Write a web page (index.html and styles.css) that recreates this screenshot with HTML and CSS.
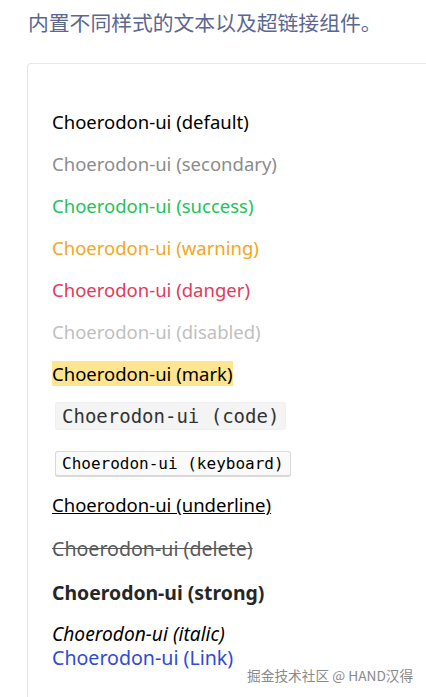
FILE: index.html
```html
<!DOCTYPE html>
<html lang="zh">
<head>
<meta charset="utf-8">
<link rel="stylesheet" href="styles.css">
</head>
<body>
<p class="intro">内置不同样式的文本以及超链接组件。</p>
<div class="card">
  <div class="row"><span class="t">Choerodon-ui (default)</span></div>
  <div class="row"><span class="t secondary">Choerodon-ui (secondary)</span></div>
  <div class="row"><span class="t success">Choerodon-ui (success)</span></div>
  <div class="row"><span class="t warning">Choerodon-ui (warning)</span></div>
  <div class="row"><span class="t danger">Choerodon-ui (danger)</span></div>
  <div class="row"><span class="t disabled">Choerodon-ui (disabled)</span></div>
  <div class="row"><mark class="t mark">Choerodon-ui (mark)</mark></div>
  <div class="row row-code"><code class="code">Choerodon-ui (code)</code></div>
  <div class="row row-kbd"><kbd class="kbd">Choerodon-ui (keyboard)</kbd></div>
  <div class="row row-u"><u class="t">Choerodon-ui (underline)</u></div>
  <div class="row row-del"><del class="t del">Choerodon-ui (delete)</del></div>
  <div class="row row-strong"><strong class="t strong">Choerodon-ui (strong)</strong></div>
  <div class="row-last">
    <div class="line"><span class="t italic">Choerodon-ui (italic)</span></div>
    <div class="line"><a class="t link" href="#">Choerodon-ui (Link)</a></div>
  </div>
</div>
<div class="watermark">掘金技术社区 @ HAND汉得</div>
</body>
</html>
```

FILE: styles.css
```css
html, body {
  margin: 0;
  padding: 0;
  background: #ffffff;
}
body {
  width: 426px;
  height: 697px;
  overflow: hidden;
  position: relative;
  font-family: "Noto Sans", "Noto Sans CJK SC", sans-serif;
}
.intro {
  margin: 8px 0 0 28px;
  font-size: 20.8px;
  line-height: 28px;
  color: #5b6791;
  font-family: "Noto Sans CJK SC", sans-serif;
  white-space: nowrap;
}
.card {
  margin: 27px 0 0 27px;
  width: 420px;
  height: 634px;
  box-sizing: border-box;
  border: 1px solid #e6e6e6;
  border-bottom: none;
  border-radius: 4px 4px 0 0;
  padding: 46px 0 0 24px;
  overflow: hidden;
}
.row {
  height: 42px;
  line-height: 24px;
}
.t {
  font-size: 18.5px;
  color: #000;
}
.secondary { color: #8c8c8c; }
.success { color: #1ec357; }
.warning { color: #f5a623; }
.danger { color: #e5395a; }
.disabled { color: #bfbfbf; }
.mark {
  background: #ffe58f;
  padding: 0;
}
.row-code { height: 47px; }
.code {
  font-family: "DejaVu Sans Mono", monospace;
  font-size: 19px;
  color: #333;
  background: #f4f4f4;
  border: 1px solid #f0f0f0;
  border-radius: 3px;
  padding: 2px 6px;
  margin-left: 3px;
}
.kbd {
  font-family: "DejaVu Sans Mono", monospace;
  font-size: 16px;
  color: #000;
  background: #fafafa;
  border: 1px solid #d9d9d9;
  border-bottom-width: 2px;
  border-radius: 3px;
  padding: 2px 6px;
  margin-left: 3px;
}
.row-u { height: 44px; }
.row-del { height: 44px; }
.del { color: #595959; font-size: 19.6px; }
.strong { font-weight: 700; color: #262626; font-size: 19.4px; }
.row-last { display: flex; flex-direction: column; gap: 0; }
.line { line-height: 22.5px; }
.italic { font-style: italic; font-size: 19.2px; }
.link { color: #2e4bd9; text-decoration: none; font-size: 19.6px; }
.watermark {
  position: absolute;
  left: 247px;
  top: 665px;
  font-size: 13.7px;
  color: #8a8a8a;
  font-family: "Noto Sans CJK SC", sans-serif;
}
```
